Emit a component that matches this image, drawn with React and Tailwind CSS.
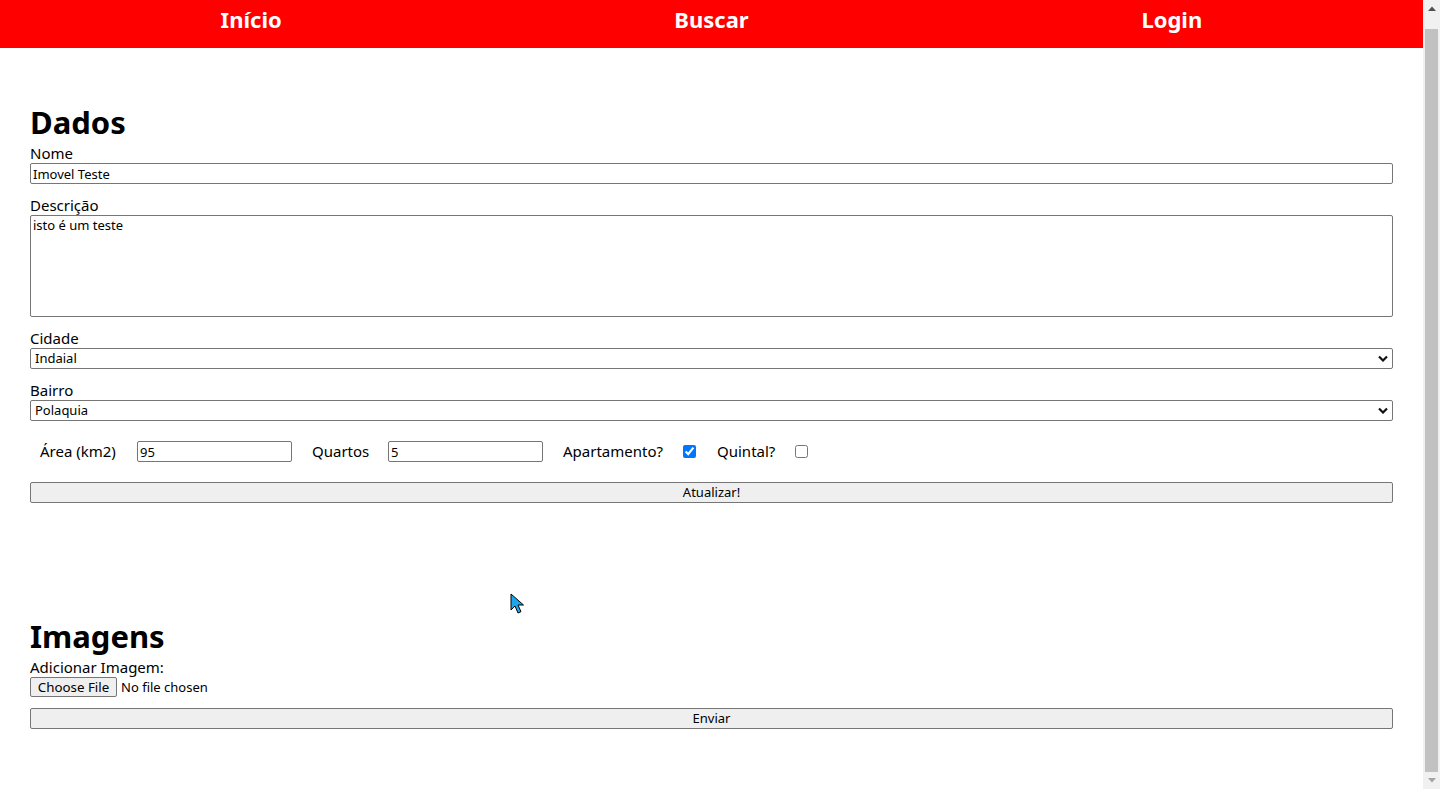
import { useState } from 'react'

// Page-wide text font (Segoe UI is not available, Noto Sans is the closest)
const font = "font-['Noto_Sans','Open_Sans',sans-serif]"

const fieldBox =
  'block w-full h-[21px] border border-[#767676] rounded-[2px] bg-white text-black text-[13px] leading-[19px] px-[2px] py-0 outline-none'

const grayButton =
  'block w-full h-[21px] border border-[#767676] rounded-[2px] bg-[#efefef] text-black text-[13px] leading-[19px] text-center'

function Label({ children }) {
  return <label className="block h-[21px] text-[15px] leading-[23px] text-black">{children}</label>
}

function Chevron() {
  return (
    <svg
      className="pointer-events-none absolute right-[5px] top-[7px]"
      width="10"
      height="7"
      viewBox="0 0 10 7"
      fill="none"
    >
      <path d="M1 1.5l4 4 4-4" stroke="#111" strokeWidth="2.2" />
    </svg>
  )
}

function SelectField({ value, options }) {
  const [current, setCurrent] = useState(value)
  return (
    <div className="relative">
      <select
        value={current}
        onChange={(e) => setCurrent(e.target.value)}
        className={fieldBox + ' appearance-none pl-[4px]'}
      >
        {options.map((o) => (
          <option key={o}>{o}</option>
        ))}
      </select>
      <Chevron />
    </div>
  )
}

function NavBar() {
  return (
    <nav className="h-12 bg-[#ff0000] grid grid-cols-3 px-[21px] pt-1">
      {['Início', 'Buscar', 'Login'].map((item) => (
        <a
          key={item}
          href="#"
          className="text-center text-white font-bold text-[22px] leading-[30px]"
        >
          {item}
        </a>
      ))}
    </nav>
  )
}

function Scrollbar() {
  return (
    <div className="w-[17px] h-full bg-[#f1f1f1] flex flex-col items-center">
      <div className="h-[17px] w-full flex items-center justify-center">
        <svg width="8" height="5" viewBox="0 0 8 5">
          <path d="M0 5L4 0.5 8 5z" fill="#505050" />
        </svg>
      </div>
      <div className="h-[12px]" />
      <div className="flex-1 w-[13px] bg-[#c1c1c1]" />
      <div className="h-[17px] w-full flex items-center justify-center">
        <svg width="8" height="5" viewBox="0 0 8 5">
          <path d="M0 0L4 4.5 8 0z" fill="#a3a3a3" />
        </svg>
      </div>
    </div>
  )
}

function Cursor() {
  return (
    <svg
      className="absolute left-[510px] top-[593px]"
      width="14"
      height="21"
      viewBox="0 0 14 21"
    >
      <path
        d="M1 1v16l4-4 3 7 3-1.3-3-6.7h5.5z"
        fill="#1fa6ea"
        stroke="#000"
        strokeWidth="1"
        strokeLinejoin="round"
      />
    </svg>
  )
}

export default function App() {
  const [apto, setApto] = useState(true)
  const [quintal, setQuintal] = useState(false)

  return (
    <div className={'relative flex h-[789px] overflow-hidden bg-white ' + font}>
      <div className="flex-1 min-w-0">
        <NavBar />

        <form className="px-[30px] pt-[52px]" onSubmit={(e) => e.preventDefault()}>
          <h1 className="text-[31px] leading-[44px] h-[42px] font-bold text-black">Dados</h1>

          <Label>Nome</Label>
          <input className={fieldBox} defaultValue="Imovel Teste" />

          <div className="mt-[10px]">
            <Label>Descrição</Label>
            <textarea
              className="block w-full h-[102px] border border-[#767676] rounded-[2px] text-[13px] leading-[16px] px-[2px] pt-[1px] resize-none outline-none text-black"
              defaultValue="isto é um teste"
            />
          </div>

          <div className="mt-[10px]">
            <Label>Cidade</Label>
            <SelectField value="Indaial" options={['Indaial', 'Blumenau', 'Timbó']} />
          </div>

          <div className="mt-[10px]">
            <Label>Bairro</Label>
            <SelectField value="Polaquia" options={['Polaquia', 'Centro', 'Estradinha']} />
          </div>

          <div className="mt-5 h-[21px] flex items-center gap-5 pl-[10px] text-[15px] leading-[23px] text-black">
            <span className="w-[77px] whitespace-nowrap">Área (km2)</span>
            <input className={fieldBox + ' !w-[155px]'} defaultValue="95" />
            <span className="w-[56px] whitespace-nowrap">Quartos</span>
            <input className={fieldBox + ' !w-[155px]'} defaultValue="5" />
            <span className="w-[100px] whitespace-nowrap">Apartamento?</span>
            <span className="w-[14px] flex items-center">
              <input
                type="checkbox"
                checked={apto}
                onChange={() => setApto(!apto)}
                className="m-0 w-[13px] h-[13px] accent-[#0075ff]"
              />
            </span>
            <span className="w-[58px] whitespace-nowrap">Quintal?</span>
            <span className="w-[14px] flex items-center">
              <input
                type="checkbox"
                checked={quintal}
                onChange={() => setQuintal(!quintal)}
                className="m-0 w-[13px] h-[13px] accent-[#0075ff]"
              />
            </span>
          </div>

          <button type="submit" className={grayButton + ' mt-5'}>
            Atualizar!
          </button>

          <h1 className="mt-[111px] text-[31px] leading-[44px] h-[42px] font-bold text-black">Imagens</h1>
          <Label>Adicionar Imagem:</Label>
          <div className="h-[20px] flex items-center text-[13px] text-black">
            <button
              type="button"
              className="w-[87px] h-[20px] border border-[#767676] rounded-[2px] bg-[#efefef] text-[13.33px] leading-[18px] text-center"
            >
              Choose File
            </button>
            <span className="ml-[4px] leading-[18px]">No file chosen</span>
          </div>

          <button type="button" className={grayButton + ' mt-[11px]'}>
            Enviar
          </button>
        </form>
      </div>

      <Scrollbar />
      <Cursor />
    </div>
  )
}
